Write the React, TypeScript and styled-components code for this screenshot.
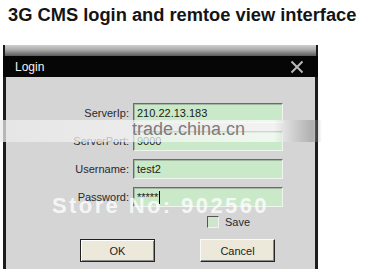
import React from 'react';
import styled, { createGlobalStyle } from 'styled-components';

const GlobalStyle = createGlobalStyle`
  html, body {
    margin: 0;
    padding: 0;
    background: #ffffff;
  }
  body {
    font-family: "Liberation Sans", Arial, sans-serif;
  }
`;

const Page = styled.div`
  position: relative;
  width: 378px;
  height: 277px;
  overflow: hidden;
  background: #ffffff;
`;

const Heading = styled.h1`
  margin: 0;
  padding: 6px 0 0 8px;
  font-family: "Liberation Sans", Arial, sans-serif;
  font-size: 18.3px;
  line-height: 18px;
  font-weight: 700;
  color: #141414;
`;

const Window = styled.div`
  margin: 21px 0 0 3px;
  width: 315px;
  display: flex;
  flex-direction: column;
`;

const TopStrip = styled.div`
  height: 11px;
  background: linear-gradient(#cfcfcf, #a8a8a8 45%, #5a5a5a);
  border-left: 2px solid #1a1a1a;
  border-right: 2px solid #1a1a1a;
`;

const TitleBar = styled.div`
  height: 21px;
  background: #060606;
  display: flex;
  align-items: center;
  justify-content: space-between;
  padding: 0 14px 0 12px;
  color: #f4f4f4;
  font-family: "Liberation Sans", Arial, sans-serif;
  font-size: 12px;
`;

const CloseIcon = styled.svg`
  width: 14px;
  height: 14px;
  display: block;
`;

const Body = styled.div`
  background: #d5d5d5;
  border-left: 3px solid #1c1c1c;
  border-right: 3px solid #1c1c1c;
  height: 192px;
  padding-top: 26px;
  box-sizing: border-box;
  display: flex;
  flex-direction: column;
`;

const Form = styled.div`
  display: grid;
  grid-template-columns: 123px 150px;
  column-gap: 4px;
  row-gap: 8px;
  align-items: center;
`;

const Label = styled.div`
  text-align: right;
  font-family: "Liberation Sans", Arial, sans-serif;
  font-size: 11px;
  color: #2a2a2a;
`;

const Field = styled.div`
  height: 20px;
  box-sizing: border-box;
  background: #cae9c9;
  border-top: 1px solid #6b6b6b;
  border-left: 1px solid #6b6b6b;
  border-right: 1px solid #eef5ee;
  border-bottom: 1px solid #eef5ee;
  box-shadow: inset 1px 1px 0 #a3b8a3;
  padding: 3px 0 0 3px;
  font-family: "Liberation Sans", Arial, sans-serif;
  font-size: 11px;
  color: #1a1a1a;
  display: flex;
  align-items: flex-start;
`;

const Caret = styled.span`
  display: inline-block;
  width: 1px;
  height: 13px;
  background: #000;
  margin-left: 1px;
`;

const SaveRow = styled.div`
  display: flex;
  align-items: center;
  gap: 6px;
  margin: 9px 0 0 201px;
  font-family: "Liberation Sans", Arial, sans-serif;
  font-size: 11px;
  color: #2a2a2a;
`;

const CheckBox = styled.div`
  width: 12px;
  height: 12px;
  box-sizing: border-box;
  background: #cfe6cd;
  border-top: 1px solid #555;
  border-left: 1px solid #555;
  border-right: 1px solid #f2f2f2;
  border-bottom: 1px solid #f2f2f2;
`;

const ButtonRow = styled.div`
  display: flex;
  gap: 45px;
  margin: 11px 0 0 74px;
`;

const Button = styled.div<{ $default?: boolean }>`
  width: 75px;
  height: 23px;
  box-sizing: border-box;
  background: #ece9da;
  display: flex;
  align-items: center;
  justify-content: center;
  font-family: "Liberation Sans", Arial, sans-serif;
  font-size: 11px;
  color: #222;
  border-top: 1px solid ${p => (p.$default ? '#202020' : '#fafafa')};
  border-left: 1px solid ${p => (p.$default ? '#202020' : '#fafafa')};
  border-right: 1px solid #262626;
  border-bottom: 1px solid #262626;
  box-shadow: ${p =>
    p.$default
      ? 'inset 1px 1px 0 #ffffff, inset -1px -1px 0 #8a8a8a'
      : 'inset -1px -1px 0 #8a8a8a'};
`;

const Band = styled.div`
  position: absolute;
  left: 0;
  top: 120px;
  width: 322px;
  height: 22px;
  background: linear-gradient(90deg, rgba(235, 235, 235, 0.75), rgba(255, 255, 255, 0.7) 85%, rgba(150, 150, 150, 0.6) 97%, rgba(255, 255, 255, 0));
`;

const BandText = styled.div`
  position: absolute;
  left: 132px;
  top: 119px;
  font-family: "Liberation Sans", Arial, sans-serif;
  font-size: 18px;
  color: #7c7c7c;
`;

const StoreMark = styled.div`
  position: absolute;
  left: 52px;
  top: 193px;
  font-family: "Liberation Sans", Arial, sans-serif;
  font-size: 22px;
  font-weight: 700;
  letter-spacing: 2.4px;
  color: rgba(255, 255, 255, 0.78);
`;

const App: React.FC = () => {
  const fields = [
    { label: 'ServerIp:', value: '210.22.13.183' },
    { label: 'ServerPort:', value: '9000' },
    { label: 'Username:', value: 'test2' },
  ];

  return (
    <Page>
      <GlobalStyle />
      <Heading>3G CMS login and remtoe view interface</Heading>
      <Window>
        <TopStrip />
        <TitleBar>
          <span>Login</span>
          <CloseIcon viewBox="0 0 14 14">
            <path d="M1.5 1.5 L12.5 12.5 M12.5 1.5 L1.5 12.5" stroke="#b8b8b8" strokeWidth="2" fill="none" />
          </CloseIcon>
        </TitleBar>
        <Body>
          <Form>
            {fields.map(f => (
              <React.Fragment key={f.label}>
                <Label>{f.label}</Label>
                <Field>{f.value}</Field>
              </React.Fragment>
            ))}
            <Label>Password:</Label>
            <Field>
              *****
              <Caret />
            </Field>
          </Form>
          <SaveRow>
            <CheckBox />
            <span>Save</span>
          </SaveRow>
          <ButtonRow>
            <Button $default>OK</Button>
            <Button>Cancel</Button>
          </ButtonRow>
        </Body>
      </Window>
      <Band />
      <BandText>trade.china.cn</BandText>
      <StoreMark>Store No: 902560</StoreMark>
    </Page>
  );
};

export default App;
